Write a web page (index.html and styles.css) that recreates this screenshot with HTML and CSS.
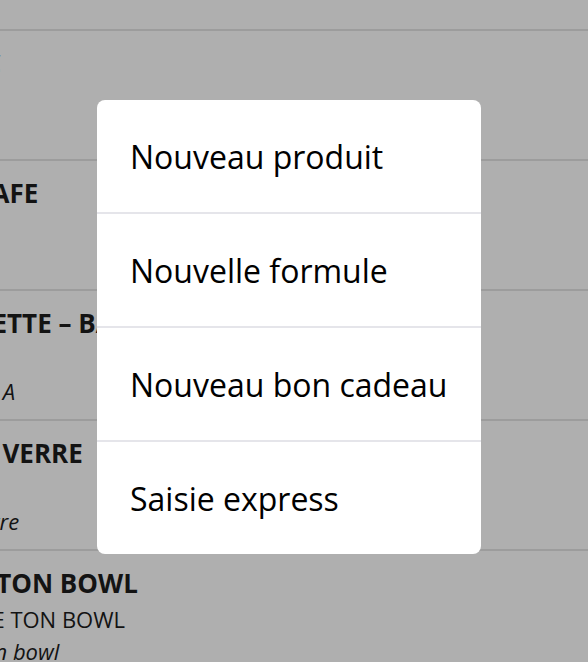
FILE: index.html
```html
<!DOCTYPE html>
<html lang="fr">
<head>
<meta charset="utf-8">
<title>Menu</title>
<link rel="stylesheet" href="styles.css">
</head>
<body>
<div class="list">
  <div class="row row-top"></div>
  <div class="row">
    <div class="title">BOISSON -CHOC</div>
    <div class="sub"></div>
    <div class="desc"></div>
  </div>
  <div class="row">
    <div class="title">BOISSON -UN CAFE</div>
    <div class="sub"></div>
    <div class="desc"></div>
  </div>
  <div class="row">
    <div class="title">TOPS - VINAIGRETTE – BALSAMIQUE</div>
    <div class="sub"></div>
    <div class="desc">Sauce vinaigrette bio A</div>
  </div>
  <div class="row">
    <div class="title">VIN BLANC - AU VERRE</div>
    <div class="sub"></div>
    <div class="desc">Vin blanc frais au verre</div>
  </div>
  <div class="row">
    <div class="title">POKE - CHOISIT TON BOWL</div>
    <div class="sub">POKE – RECOMPOSE TON BOWL</div>
    <div class="desc">Pokes - Composez ton bowl</div>
  </div>
</div>

<div class="overlay">
  <div class="sheet">
    <div class="item">Nouveau produit</div>
    <div class="item">Nouvelle formule</div>
    <div class="item">Nouveau bon cadeau</div>
    <div class="item">Saisie express</div>
  </div>
</div>
</body>
</html>
```
FILE: styles.css
```css
html, body {
  margin: 0;
  padding: 0;
}
body {
  width: 588px;
  height: 662px;
  overflow: hidden;
  background: #ffffff;
  font-family: "Open Sans", "Noto Sans", sans-serif;
  color: #1c1c1c;
  position: relative;
}
.list {
  display: flex;
  flex-direction: column;
  width: 588px;
  overflow: hidden;
}
.row {
  flex: none;
  height: 100px;
  padding: 14px 0 14px 0;
  border-bottom: 2px solid #e3e3e3;
  white-space: nowrap;
  margin-left: -205px;
}
.row-top {
  height: 29px;
  padding: 0;
}
.title {
  font-size: 26px;
  font-weight: 700;
  line-height: 36px;
}
.sub {
  font-size: 22px;
  line-height: 36px;
  height: 36px;
}
.desc {
  font-size: 22px;
  font-style: italic;
  line-height: 28px;
  height: 28px;
}
.overlay {
  position: absolute;
  inset: 0;
  background: rgba(0, 0, 0, 0.314);
  display: flex;
  align-items: flex-start;
  padding: 100px 0 0 97px;
}
.sheet {
  width: 384px;
  background: #ffffff;
  border-radius: 8px;
  overflow: hidden;
  display: flex;
  flex-direction: column;
}
.item {
  height: 112px;
  display: flex;
  align-items: center;
  padding-left: 33px;
  font-size: 32px;
  color: #000000;
  border-bottom: 2px solid #e5e5ea;
}
.item:last-child {
  border-bottom: none;
}
```
